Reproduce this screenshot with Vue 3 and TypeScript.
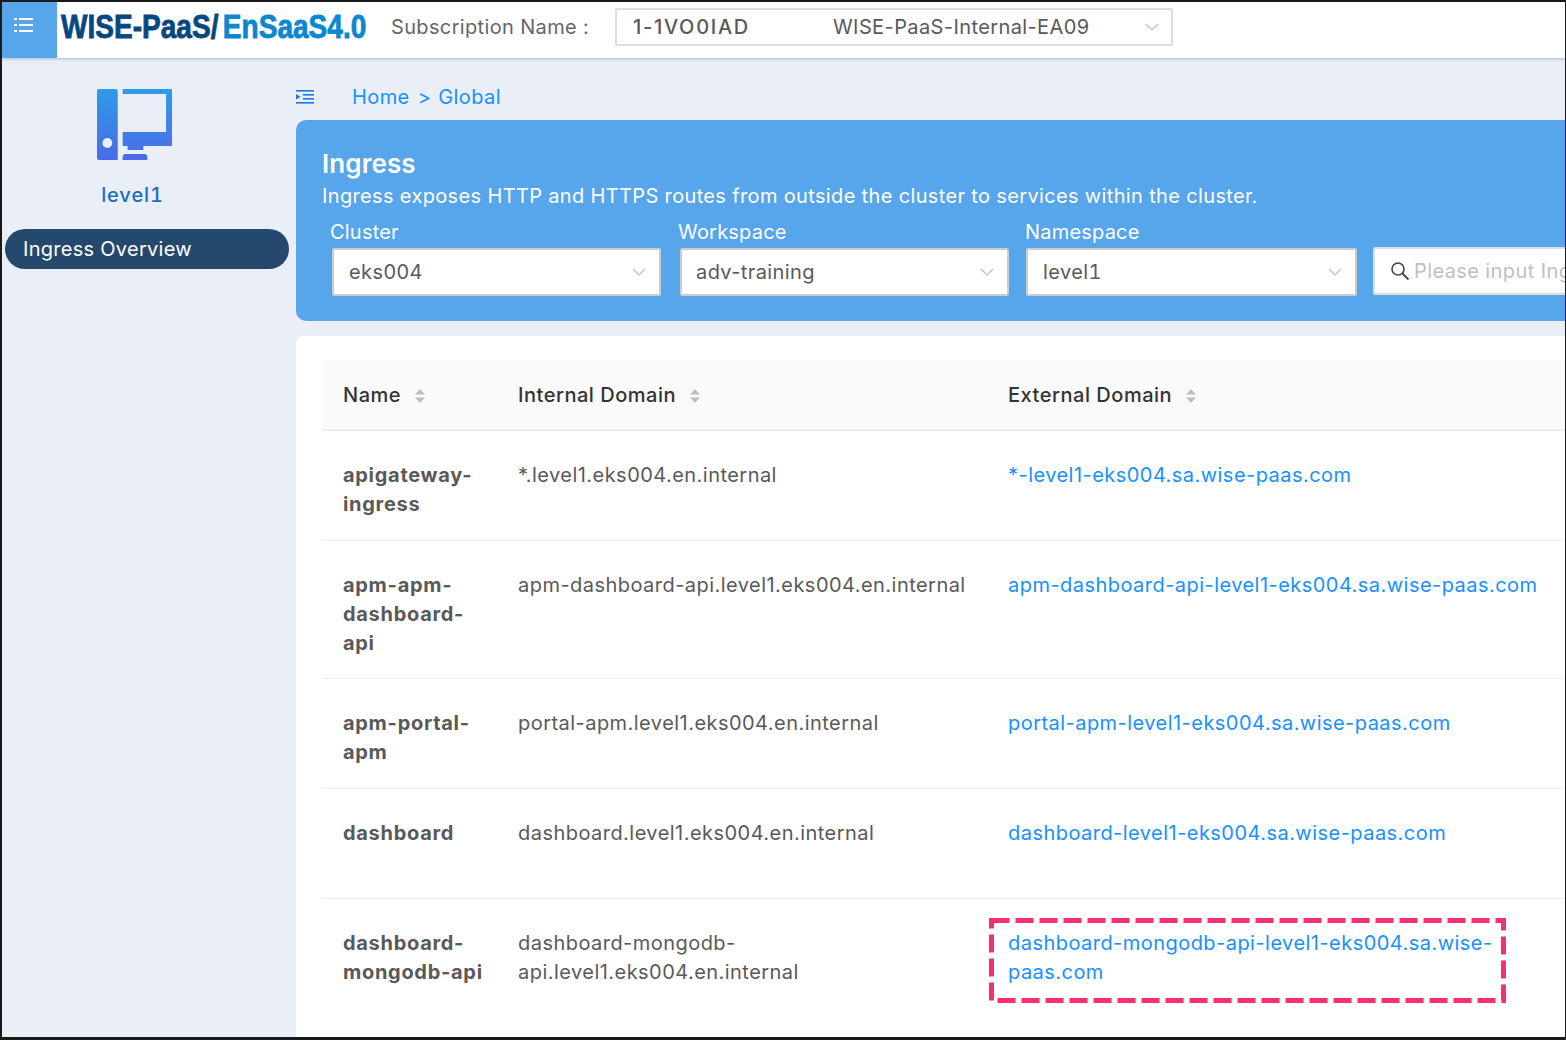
<template>
  <div class="app">
    <header class="topbar">
      <button class="menu-btn" type="button" aria-label="menu">
        <svg width="20" height="16" viewBox="0 0 20 16">
          <g fill="#fff">
            <rect x="0" y="1" width="3" height="2" />
            <rect x="5" y="1" width="14" height="2" />
            <rect x="0" y="7" width="3" height="2" />
            <rect x="5" y="7" width="14" height="2" />
            <rect x="0" y="13" width="3" height="2" />
            <rect x="5" y="13" width="14" height="2" />
          </g>
        </svg>
      </button>
      <div class="logo">
        <span class="logo-text"><span class="logo-dark">WISE-PaaS/</span> <span class="logo-light">EnSaaS4.0</span></span>
      </div>
      <span class="sub-label">Subscription Name :</span>
      <div class="sub-select">
        <span class="sub-id">1-1VO0IAD</span>
        <span class="sub-name">WISE-PaaS-Internal-EA09</span>
        <svg class="chevron" width="14" height="8" viewBox="0 0 14 8">
          <path d="M1 1l6 6 6-6" fill="none" stroke="#bbb" stroke-width="1.2" />
        </svg>
      </div>
    </header>

    <div class="body">
      <aside class="sidebar">
        <svg class="host-icon" width="75" height="71" viewBox="0 0 76 71" preserveAspectRatio="none">
          <defs>
            <linearGradient id="hostFill" x1="0" y1="0" x2="0" y2="1">
              <stop offset="0" stop-color="#2f9be6" />
              <stop offset="1" stop-color="#4b6ae6" />
            </linearGradient>
          </defs>
          <path
            fill="url(#hostFill)"
            fill-rule="evenodd"
            d="M2 0h17a2 2 0 0 1 2 2v69H2a2 2 0 0 1-2-2V2a2 2 0 0 1 2-2zM10.500 49a5 5 0 1 0 0 10 5 5 0 0 0 0-10zM26 0h49a1 1 0 0 1 1 1v55a1 1 0 0 1-1 1H47v4H31v-4h-5V43h44V5H26zM26 71v-3a3 3 0 0 1 3-3h19a3 3 0 0 1 3 3v3z"
          />
        </svg>
        <div class="host-name">level1</div>
        <div class="nav-item">Ingress Overview</div>
      </aside>

      <main class="main">
        <div class="crumbs">
          <svg width="18" height="14" viewBox="0 0 18 14">
            <g fill="#1a78d6">
              <rect x="0" y="0" width="18" height="1.600" />
              <rect x="7" y="4" width="11" height="1.600" />
              <rect x="7" y="8" width="11" height="1.600" />
              <rect x="0" y="12" width="18" height="1.600" />
              <path d="M0 4l4.500 2.800L0 9.600z" />
            </g>
          </svg>
          <a class="crumb crumb-home">Home</a>
          <span class="crumb crumb-sep">&gt;</span>
          <a class="crumb">Global</a>
        </div>

        <section class="banner">
          <h1 class="title">Ingress</h1>
          <p class="desc">Ingress exposes HTTP and HTTPS routes from outside the cluster to services within the cluster.</p>
          <div class="filters">
            <div v-for="f in filters" :key="f.label" class="filter" :class="f.cls">
              <label class="filter-label">{{ f.label }}</label>
              <div class="select">
                <span>{{ f.value }}</span>
                <svg width="14" height="8" viewBox="0 0 14 8">
                  <path d="M1 1l6 6 6-6" fill="none" stroke="#bbb" stroke-width="1.2" />
                </svg>
              </div>
            </div>
            <div class="search">
              <svg width="20" height="20" viewBox="0 0 20 20">
                <circle cx="8" cy="8" r="6" fill="none" stroke="#444" stroke-width="1.600" />
                <path d="M12.500 12.500l6 6" stroke="#444" stroke-width="1.800" />
              </svg>
              <span class="placeholder">Please input Ingress Name</span>
            </div>
          </div>
        </section>

        <section class="card">
          <div class="table">
            <div class="row head">
              <div v-for="h in headers" :key="h" class="cell">
                {{ h }}
                <svg class="sorter" width="10" height="16" viewBox="0 0 10 16">
                  <path d="M5 1l5 5.500H0z" fill="#bfbfbf" />
                  <path d="M5 15l5-5.500H0z" fill="#bfbfbf" />
                </svg>
              </div>
            </div>
            <div v-for="r in rows" :key="r.name" class="row">
              <div class="cell name">{{ r.name }}</div>
              <div class="cell">{{ r.internal }}</div>
              <div class="cell">
                <a class="link">{{ r.external }}</a>
                <svg v-if="r.marked" class="mark" width="517" height="85" viewBox="0 0 517 85">
                  <rect x="2.500" y="2.500" width="512" height="80" fill="none" stroke="#f9306f" stroke-width="5" stroke-dasharray="18 6" />
                </svg>
              </div>
            </div>
          </div>
        </section>
      </main>
    </div>
  </div>
</template>

<script setup lang="ts">
interface Filter {
  label: string
  value: string
  cls: string
}

interface Row {
  name: string
  internal: string
  external: string
  marked?: boolean
}

const filters: Filter[] = [
  { label: 'Cluster', value: 'eks004', cls: 'f-cluster' },
  { label: 'Workspace', value: 'adv-training', cls: 'f-workspace' },
  { label: 'Namespace', value: 'level1', cls: 'f-namespace' }
]

const headers = ['Name', 'Internal Domain', 'External Domain']

const rows: Row[] = [
  {
    name: 'apigateway-ingress',
    internal: '*.level1.eks004.en.internal',
    external: '*-level1-eks004.sa.wise-paas.com'
  },
  {
    name: 'apm-apm-dashboard-api',
    internal: 'apm-dashboard-api.level1.eks004.en.internal',
    external: 'apm-dashboard-api-level1-eks004.sa.wise-paas.com'
  },
  {
    name: 'apm-portal-apm',
    internal: 'portal-apm.level1.eks004.en.internal',
    external: 'portal-apm-level1-eks004.sa.wise-paas.com'
  },
  {
    name: 'dashboard',
    internal: 'dashboard.level1.eks004.en.internal',
    external: 'dashboard-level1-eks004.sa.wise-paas.com'
  },
  {
    name: 'dashboard-mongodb-api',
    internal: 'dashboard-mongodb-api.level1.eks004.en.internal',
    external: 'dashboard-mongodb-api-level1-eks004.sa.wise-paas.com',
    marked: true
  }
]
</script>

<style>
html,
body {
  margin: 0;
  background: #fff;
}
</style>

<style scoped>
.app {
  box-sizing: border-box;
  width: 1566px;
  height: 1040px;
  border: 2px solid #1a1a1a;
  border-right-width: 1px;
  border-bottom-width: 3px;
  display: flex;
  flex-direction: column;
  overflow: hidden;
  background: #eaeff7;
  font-family: Inter, "Noto Sans", sans-serif;
  font-size: 20px;
  letter-spacing: 0.4px;
  color: #595959;
}

.topbar {
  flex: none;
  height: 56px;
  display: flex;
  align-items: center;
  background: #fff;
  box-shadow: 0 1px 3px rgba(90, 120, 170, 0.45);
  position: relative;
  z-index: 1;
}

.menu-btn {
  flex: none;
  width: 55px;
  height: 56px;
  padding: 0 0 10px 12px;
  border: 0;
  background: #57a5ea;
  text-align: left;
  display: flex;
  align-items: center;
}

.logo {
  flex: none;
  width: 334px;
  margin-top: -7px;
  padding-left: 4px;
  box-sizing: border-box;
  overflow: hidden;
}

.logo-text {
  display: inline-block;
  white-space: nowrap;
  font-family: "Liberation Sans", Arial, sans-serif;
  font-weight: 700;
  font-size: 33px;
  line-height: 40px;
  letter-spacing: 0;
  word-spacing: -4px;
  transform: scaleX(0.85);
  transform-origin: left center;
  -webkit-text-stroke: 0.8px currentColor;
}

.logo-dark {
  color: #07477f;
}

.logo-light {
  color: #0a87cf;
}

.sub-label {
  flex: none;
  width: 224px;
  margin-top: -7px;
  letter-spacing: 0.35px;
  color: #666;
}

.sub-select {
  flex: none;
  box-sizing: border-box;
  width: 558px;
  height: 38px;
  margin-top: -6px;
  border: 2px solid #ddd;
  border-radius: 2px;
  display: flex;
  align-items: center;
  padding: 0 12px 0 16px;
}

.sub-id {
  width: 200px;
  font-weight: 500;
  letter-spacing: 1.7px;
}

.sub-name {
  flex: 1;
}

.body {
  flex: 1;
  min-height: 0;
  display: flex;
}

.sidebar {
  flex: none;
  width: 294px;
  display: flex;
  flex-direction: column;
  align-items: center;
  padding: 31px 34px 0 0;
  box-sizing: border-box;
}

.host-icon {
  display: block;
  margin-left: 4px;
}

.host-name {
  margin-top: 20px;
  margin-left: 1px;
  color: #1a6fc0;
  font-weight: 500;
  font-feature-settings: "tnum";
  letter-spacing: 0.9px;
  line-height: 30px;
}

.nav-item {
  flex: none;
  box-sizing: border-box;
  align-self: flex-start;
  width: 284px;
  height: 40px;
  margin: 19px 0 0 3px;
  padding-left: 18px;
  border-radius: 20px;
  background: #24496d;
  color: #fff;
  line-height: 40px;
  letter-spacing: 0.28px;
}

.main {
  flex: 1;
  min-width: 0;
  display: flex;
  flex-direction: column;
  overflow: hidden;
}

.crumbs {
  flex: none;
  box-sizing: border-box;
  height: 62px;
  padding-top: 16px;
  display: flex;
  align-items: center;
}

.crumb {
  color: #1890ff;
  line-height: 30px;
}

.crumb-home {
  margin-left: 38px;
}

.crumb-sep {
  margin: 0 7px 0 8px;
}

.banner {
  flex: none;
  box-sizing: border-box;
  height: 201px;
  padding: 27px 0 0 26px;
  border-radius: 10px 0 0 10px;
  background: #57a5ea;
  color: #fff;
}

.title {
  margin: 0;
  font-size: 26px;
  font-weight: 600;
  line-height: 34px;
  letter-spacing: 0.1px;
}

.desc {
  margin: 0;
  line-height: 30px;
  letter-spacing: 0.35px;
  white-space: nowrap;
}

.filters {
  display: flex;
  align-items: flex-end;
  margin-top: 6px;
}

.filter {
  flex: none;
}

.filter-label {
  display: block;
  line-height: 31px;
  letter-spacing: 0.2px;
}

.f-cluster {
  padding-left: 8px;
  width: 356px;
  box-sizing: border-box;
}

.f-workspace {
  width: 347px;
}

.f-namespace {
  width: 348px;
}

.select {
  box-sizing: border-box;
  width: 329px;
  height: 48px;
  margin-left: 2px;
  padding: 0 13px 0 15px;
  border: 2px solid #ccc;
  border-radius: 2px;
  background: #fff;
  color: #595959;
  letter-spacing: 0.4px;
  display: flex;
  align-items: center;
  justify-content: space-between;
}

.f-workspace .select {
  padding-left: 14px;
}

.f-namespace .select {
  width: 331px;
  margin-left: 1px;
  font-feature-settings: "tnum";
}

.search {
  flex: none;
  box-sizing: border-box;
  width: 340px;
  height: 48px;
  margin-bottom: 1px;
  border: 2px solid #ddd;
  border-radius: 2px;
  background: #fff;
  display: flex;
  align-items: center;
  gap: 4px;
  padding-left: 15px;
  white-space: nowrap;
}

.placeholder {
  color: #bfbfbf;
}

.card {
  flex: 1;
  min-height: 0;
  margin-top: 15px;
  padding: 24px 0 0 26px;
  background: #fff;
  border-radius: 8px 0 0 0;
}

.table {
  width: 1260px;
}

.row {
  display: grid;
  grid-template-columns: 175px 490px 595px;
  box-sizing: border-box;
  min-height: 109.7px;
  padding-top: 30px;
  padding-bottom: 20.7px;
  border-bottom: 1px solid #eee;
  line-height: 29px;
  letter-spacing: 0.46px;
}

.row:last-child {
  border-bottom: 0;
}

.row.head {
  height: 71px;
  min-height: 0;
  padding: 1px 0 0;
  align-items: center;
  background: #fafafa;
  border-bottom: 2px solid #eee;
  color: #333;
  font-weight: 500;
  letter-spacing: 0.52px;
}

.cell {
  padding: 0 21px;
  position: relative;
}

.cell:nth-child(3) {
  padding-right: 20px;
}

.name {
  padding-right: 8px;
  font-weight: 700;
  letter-spacing: 0.7px;
}

.head .name {
  letter-spacing: inherit;
}

.sorter {
  margin-left: 8px;
  vertical-align: -2px;
}

.link {
  color: #1890ff;
}

.mark {
  position: absolute;
  left: 2px;
  top: -11px;
  pointer-events: none;
}
</style>
